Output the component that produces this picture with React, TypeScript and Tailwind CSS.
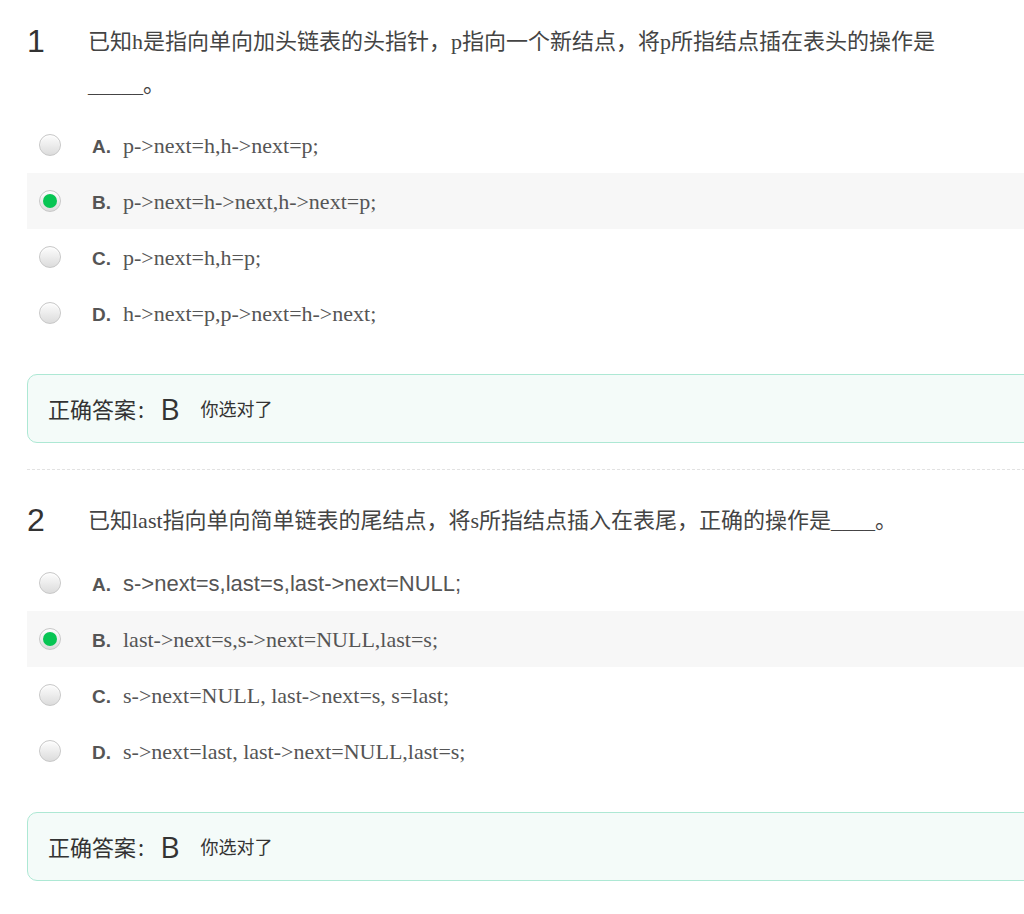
const questions = [
  {
    no: '1',
    text: '已知h是指向单向加头链表的头指针，p指向一个新结点，将p所指结点插在表头的操作是_____。',
    options: [
      { key: 'A', text: 'p->next=h,h->next=p;', sans: false },
      { key: 'B', text: 'p->next=h->next,h->next=p;', sans: false },
      { key: 'C', text: 'p->next=h,h=p;', sans: false },
      { key: 'D', text: 'h->next=p,p->next=h->next;', sans: false },
    ],
    picked: 'B',
    answer: 'B',
  },
  {
    no: '2',
    text: '已知last指向单向简单链表的尾结点，将s所指结点插入在表尾，正确的操作是____。',
    options: [
      { key: 'A', text: 's->next=s,last=s,last->next=NULL;', sans: true },
      { key: 'B', text: 'last->next=s,s->next=NULL,last=s;', sans: false },
      { key: 'C', text: 's->next=NULL, last->next=s, s=last;', sans: false },
      { key: 'D', text: 's->next=last, last->next=NULL,last=s;', sans: false },
    ],
    picked: 'B',
    answer: 'B',
  },
]

const Radio = ({ checked }: { checked: boolean }) => (
  <span className="flex h-[22px] w-[22px] shrink-0 items-center justify-center rounded-full border border-[#c8c8c8] bg-gradient-to-b from-[#fdfdfd] to-[#dcdcdc] shadow-[inset_0_1px_1px_rgba(255,255,255,0.9)]">
    {checked && <span className="h-[14px] w-[14px] rounded-full bg-[#07c553]" />}
  </span>
)

const Question = ({ q, last }: { q: (typeof questions)[number]; last: boolean }) => (
  <div className={last ? 'pt-[29px]' : 'pt-[20px]'}>
    <div className="flex">
      <div className="w-[61px] pt-[5px] font-['Liberation_Sans',sans-serif] text-[32px] leading-[32px] text-[#333]">
        {q.no}
      </div>
      <div className="w-[872px] font-['Liberation_Serif','Noto_Sans_CJK_SC',serif] text-[22px] leading-[43px] text-[#444]">
        {q.text}
      </div>
    </div>
    <div className={q.no === '1' ? 'mt-[11px]' : 'mt-[13px]'}>
      {q.options.map((o) => (
        <div
          key={o.key}
          className={`flex h-[56px] items-center pl-[12px] ${
            q.picked === o.key ? 'bg-[#f7f7f7]' : ''
          }`}
        >
          <Radio checked={q.picked === o.key} />
          <div className="ml-[31px] flex items-baseline text-[#555]">
            <span className="w-[31px] font-['Liberation_Sans',sans-serif] text-[19px] font-bold">
              {o.key}.
            </span>
            <span
              className={
                o.sans
                  ? "font-['Liberation_Sans',sans-serif] text-[22px]"
                  : "font-['Liberation_Serif',serif] text-[22px]"
              }
            >
              {o.text}
            </span>
          </div>
        </div>
      ))}
    </div>
    <div className="mt-[33px] flex h-[69px] items-center rounded-[10px] border border-[#ade8d4] bg-[#f4fbf9] pl-[20px] font-['Noto_Sans_CJK_SC',sans-serif] text-[#333]">
      <span className="text-[22px]">正确答案</span>
      <span className="ml-[2px] text-[22px]">:</span>
      <span className="ml-[16px] font-['Open_Sans','Noto_Sans_CJK_SC',sans-serif] text-[30px] leading-none">
        {q.answer}
      </span>
      <span className="ml-[21px] text-[18px]">你选对了</span>
    </div>
    {!last && <div className="mt-[26px] border-t border-dashed border-[#e2e2e2]" />}
  </div>
)

export default function App() {
  return (
    <div className="h-[914px] w-full overflow-hidden bg-white">
      <div className="w-[1100px] pl-[27px]">
        {questions.map((q, i) => (
          <Question key={q.no} q={q} last={i === questions.length - 1} />
        ))}
      </div>
    </div>
  )
}
